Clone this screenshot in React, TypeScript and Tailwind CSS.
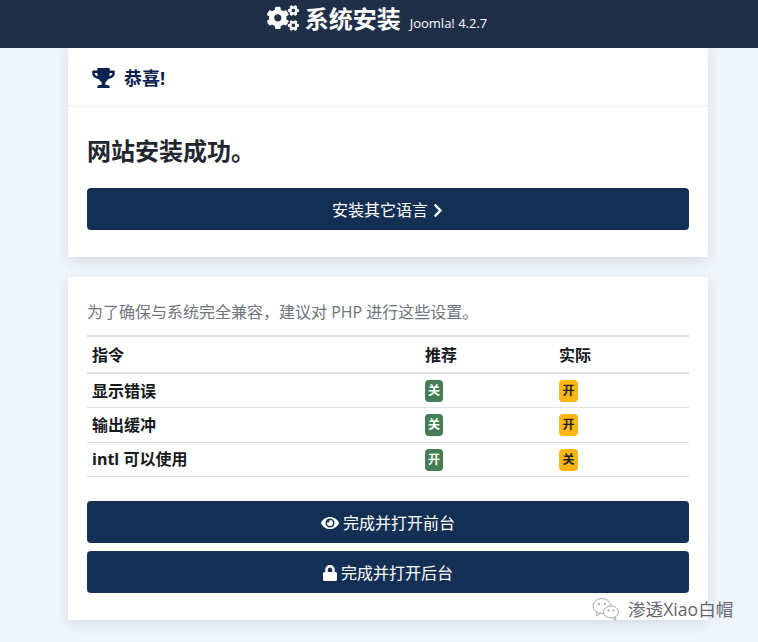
import React from 'react';
import { FaCogs, FaTrophy, FaChevronRight, FaEye, FaLock } from 'react-icons/fa';

const FONT = 'font-["Open_Sans","Noto_Sans_CJK_SC",sans-serif]';

const rows = [
  { name: '显示错误', recommended: '关', actual: '开' },
  { name: '输出缓冲', recommended: '关', actual: '开' },
  { name: 'intl 可以使用', recommended: '开', actual: '关' },
];

const Badge: React.FC<{ label: string; warn?: boolean }> = ({ label, warn }) => (
  <span
    className={`mt-[1px] flex h-[22px] items-center justify-center rounded-[4px] text-[12px] font-bold leading-none ${
      warn ? 'w-[19px] bg-[#ffb514] text-[#22262a]' : 'w-[18px] bg-[#457d54] text-white'
    }`}
  >
    {label}
  </span>
);

const WideButton: React.FC<{ icon?: React.ReactNode; after?: React.ReactNode; label: string }> = ({ icon, after, label }) => (
  <div className="flex h-[42px] items-center justify-center gap-[4px] rounded-[4px] bg-[#132f53] pt-[2px] text-[16px] text-white">
    {icon}
    <span>{label}</span>
    {after}
  </div>
);

export default function App() {
  return (
    <div className={`relative h-[642px] w-[758px] overflow-hidden bg-[#f0f4fb] ${FONT}`}>
      <header className="flex h-[48px] items-start justify-center bg-[#1f2f47] pr-[4px] text-white">
        <FaCogs className="mt-[5px] h-[26px] w-[32px]" />
        <span className="ml-[6px] mt-[1px] text-[24px] font-bold leading-[36px]">系统安装</span>
        <span className="ml-[9px] mt-[13px] text-[13px] leading-[20px]">Joomla! 4.2.7</span>
      </header>

      <main className="ml-[68px] mr-[50px] flex flex-col gap-[20px]">
        <section className="h-[209px] bg-white shadow-[0_4px_12px_rgba(30,50,90,0.12)]">
          <div className="flex h-[59px] items-center gap-[9px] border-b border-[#eceef1] pl-[24px] pt-[2px] text-[#0b2150]">
            <FaTrophy className="h-[20px] w-[23px]" />
            <span className="text-[18px] font-bold">恭喜!</span>
          </div>
          <div className="px-[19px]">
            <h1 className="mt-[26px] text-[24px] font-bold leading-[36px] text-[#22262f]">网站安装成功。</h1>
            <div className="mt-[19px]">
              <WideButton label="安装其它语言" after={<FaChevronRight className="h-[15px] w-[12px]" />} />
            </div>
          </div>
        </section>

        <section className="h-[343px] bg-white px-[19px] pt-[23px] shadow-[0_4px_12px_rgba(30,50,90,0.12)]">
          <p className="text-[16px] leading-[24px] text-[#6d757d]">为了确保与系统完全兼容，建议对 PHP 进行这些设置。</p>
          <table className="mt-[11px] w-full table-fixed border-collapse text-[16px] text-[#16191c]">
            <thead>
              <tr className="h-[37px] border-y-2 border-[#dee2e6] text-left font-bold">
                <th className="w-[338px] pl-[5px]">指令</th>
                <th className="w-[134px]">推荐</th>
                <th>实际</th>
              </tr>
            </thead>
            <tbody>
              {rows.map((row) => (
                <tr key={row.name} className="h-[34.6px] border-b border-[#dee2e6]">
                  <td className="pl-[5px] font-bold">{row.name}</td>
                  <td>
                    <Badge label={row.recommended} />
                  </td>
                  <td>
                    <Badge label={row.actual} warn />
                  </td>
                </tr>
              ))}
            </tbody>
          </table>
          <div className="mt-[24px] flex flex-col gap-[8px]">
            <WideButton label="完成并打开前台" icon={<FaEye className="h-[16px] w-[18px]" />} />
            <WideButton label="完成并打开后台" icon={<FaLock className="h-[16px] w-[14px]" />} />
          </div>
        </section>
      </main>

      {/* watermark over the page */}
      <div className="absolute left-[591px] top-[597px] flex items-center gap-[8px] text-[#63666d]">
        <svg width="29" height="24" viewBox="0 0 29 24" fill="none" stroke="#a9acb2" strokeWidth="1">
          <ellipse cx="11" cy="9" rx="9" ry="7.5" />
          <path d="M6 15l-1 4 4-2.5" />
          <ellipse cx="20" cy="15" rx="7.5" ry="6" fill="#ffffff" />
          <path d="M24 20l1 3-3.5-2" />
          <circle cx="8" cy="7" r="0.8" fill="#a9acb2" />
          <circle cx="14" cy="7" r="0.8" fill="#a9acb2" />
          <circle cx="17.5" cy="13.5" r="0.7" fill="#a9acb2" />
          <circle cx="22.5" cy="13.5" r="0.7" fill="#a9acb2" />
        </svg>
        <span className="text-[17.6px] leading-[24px]">渗透Xiao白帽</span>
      </div>
    </div>
  );
}
